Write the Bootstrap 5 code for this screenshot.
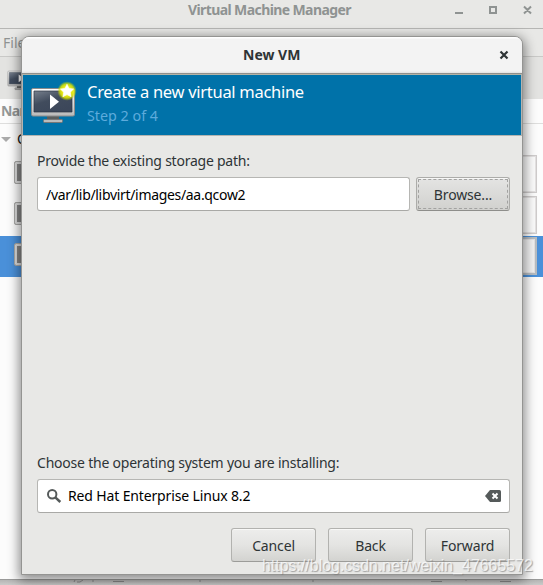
<!DOCTYPE html>
<html lang="en">
<head>
<meta charset="utf-8">
<meta name="viewport" content="width=device-width, initial-scale=1">
<title>Virtual Machine Manager</title>
<link href="https://cdn.jsdelivr.net/npm/bootstrap@5.3.0/dist/css/bootstrap.min.css" rel="stylesheet">
<style>
body{width:543px;height:585px;font-family:"Noto Sans","Open Sans",sans-serif;font-size:14px;line-height:20px;color:#2e3436;background:#c2c2c1}
.text-line{white-space:nowrap}
.main-win{height:580px;background:#fcfcfc;border-bottom:1px solid #9a9a99}
.main-title{height:29px;background:#e8e8e6;border-bottom:1px solid #b6b6b4;color:#8f9392;padding-right:11px}
.main-title .caption-text{margin-left:188px;font-weight:700;font-size:14px;letter-spacing:-.6px;line-height:20px}
.menu-strip{height:28px;background:#e8e8e6;border-bottom:1px solid #c9c9c7;color:#8f9392;padding-left:3px}
.tool-strip{height:42px;background:#e3e3e1;padding:9px 0 0 7px}
.head-strip{height:25px;border-bottom:1px solid #dededd;color:#949796;font-weight:700;padding-left:1px;letter-spacing:-.6px}
.group-line{height:30px;color:#111}
.vm-line{height:41px;padding:1px 6px 0 14px}
.vm-line.chosen{background:#4a90d9}
.mini-mon{width:30px;height:23px;margin-top:6px;border:1px solid #a9a9a7;border-radius:2px;background:#858585;box-shadow:inset 0 0 0 2px #dcdcdc}
.graph-box{width:120px;height:38px;border:1px solid #cfcccc;box-shadow:inset 0 0 0 1px #e4e2e2;background:#fbfbfb}
.chosen .graph-box{border:2px solid #b7bdc2;background:#f2f2f2}
.under-strip{height:5px;background:linear-gradient(#b5b5b4,#cacac9)}
.dialog-win{position:absolute;left:21px;top:36px;width:502px;height:539px;border:1px solid #949492;border-radius:8px 8px 0 0;background:#e8e8e6;box-shadow:0 3px 12px 2px rgba(0,0,0,.45);overflow:hidden}
.dialog-title{height:37px;background:linear-gradient(#fff 0,#fff 1px,#f3f3f3 2px,#f3f3f3 34px,#e2e2e1 36px);border-bottom:1px solid #8f8f8c;padding:0 13px 0 221px}
.dialog-title .caption-text{font-weight:700;font-size:14px}
.banner{height:62px;background:#0072a9;border:1px solid #b3b4b1;border-top-color:#b3b4a7;color:#fff;padding:4px 0 0 7px}
.banner-big{font-size:16.5px;line-height:25px;height:25px;margin-left:9px;letter-spacing:-.29px}
.banner-small{font-size:14.3px;line-height:23px;margin-left:9px;color:#5dabdc}
.form-area{padding:15px 12px 12px 15px;height:438px}
.field-label{letter-spacing:-.24px}
.os-label{letter-spacing:-.22px}
.path-row{gap:6px;margin-top:6px}
.form-area .form-control,.find-box{height:34px;border:1px solid #b6b6b3;border-bottom-color:#a9a9a6;border-radius:3px;background:#fff;color:#000;padding:0 8px;font-size:14px;box-shadow:none}
.form-area .form-control{letter-spacing:-.32px}
.find-box{margin-top:6px;letter-spacing:-.14px}
.btn-row{gap:12px;margin-top:15px}
.btn-vm{height:34px;width:85px;padding:0;border:1px solid #b2b2af;border-bottom-color:#9c9c99;border-radius:3px;background:linear-gradient(#ededec,#e4e4e2 50%,#d3d3d0);color:#2e3436;font-size:14px;line-height:31px;letter-spacing:-.15px;box-shadow:inset 0 1px #f8f8f7}
.btn-browse{width:94px;background:linear-gradient(#e4e4e3,#d1d1ce);border-color:#acaca9 #acaca9 #8e8e8b;outline:1px dashed #a2a2a0;outline-offset:-3px}
.wmark{position:absolute;left:262px;top:556px;font:15.93px/19px "Liberation Sans",Arial,sans-serif;color:rgba(255,255,255,.72);text-shadow:1px 1px 1px rgba(120,120,120,.65);white-space:nowrap}
</style>
<script src="https://cdn.jsdelivr.net/npm/bootstrap@5.3.0/dist/js/bootstrap.bundle.min.js"></script>
</head>
<body class="overflow-hidden position-relative">
<svg width="0" height="0" class="position-absolute" aria-hidden="true">
  <defs>
    <linearGradient id="frame" x2="0" y2="1"><stop stop-color="#fff"/><stop offset="1" stop-color="#b9b9b9"/></linearGradient>
    <linearGradient id="screen" x2=".6" y2="1"><stop stop-color="#77808d"/><stop offset=".5" stop-color="#414c5d"/><stop offset="1" stop-color="#3c475a"/></linearGradient>
    <radialGradient id="glow"><stop offset=".4" stop-color="#f6f620"/><stop offset=".72" stop-color="#dfe500" stop-opacity=".85"/><stop offset="1" stop-color="#b8d400" stop-opacity="0"/></radialGradient>
    <symbol id="monitor" viewBox="0 0 48 48">
      <path d="M17 37h12v5H17z" fill="#5b5e5e"/>
      <rect x="13.5" y="40.5" width="19" height="3" rx="1" fill="#bcbcbc" stroke="#777"/>
      <rect x="1.5" y="9.5" width="43" height="27.500" rx="1.500" fill="url(#frame)" stroke="#8c8c8c"/>
      <path d="M4 12h38v21H4z" fill="url(#screen)" stroke="#2d3542" stroke-width=".7"/>
      <path d="M20 15.500v14.500l9-7.200z" fill="#fff"/>
      <circle cx="37" cy="12" r="9.800" fill="url(#glow)"/>
      <path d="M37 5.300l2 4.100 4.600.6-3.300 3.200.8 4.600-4.100-2.200-4.100 2.200.8-4.600-3.300-3.200 4.600-.6z" fill="#fff" stroke="#fff" stroke-width=".6"/>
    </symbol>
  </defs>
</svg>
<main class="main-win">
  <div class="main-title d-flex align-items-start">
    <span class="caption-text text-line">Virtual Machine Manager</span>
    <svg class="ms-auto" width="78" height="20" fill="none" stroke="#8f9392" stroke-width="2"><path d="M1 13h8M36 7h6v6h-6zM70 6.500l7 7M77 6.500l-7 7"/></svg>
  </div>
  <div class="menu-strip d-flex align-items-center text-line">File</div>
  <div class="tool-strip"><svg class="d-block" width="28" height="26" viewBox="0 0 28 28" preserveAspectRatio="none"><use href="#monitor" width="28" height="28"/></svg></div>
  <div class="head-strip d-flex align-items-center text-line">Name</div>
  <div class="group-line d-flex align-items-center text-line"><svg width="17" height="12"><path d="M1 4h10l-5 5z" fill="#aaa"/></svg>QEMU/KVM</div>
  <div class="vm-line d-flex align-items-start justify-content-between"><span class="mini-mon"></span><span class="graph-box"></span></div>
  <div class="vm-line d-flex align-items-start justify-content-between"><span class="mini-mon"></span><span class="graph-box"></span></div>
  <div class="vm-line chosen d-flex align-items-start justify-content-between"><span class="mini-mon"></span><span class="graph-box"></span></div>
</main>
<div class="under-strip d-flex">
  <svg width="543" height="5" stroke="#858585" fill="none"><path d="M75 0l-1 2M83 0l-3 2h-3M93 0v2M113 1.500h11M200 0v2M313 0v2M431 1.500h11M466 0v1M500 1.500h11"/></svg>
</div>

<section class="dialog-win" role="dialog" aria-label="New VM">
  <header class="dialog-title d-flex align-items-center justify-content-between">
    <span class="caption-text text-line">New VM</span>
    <svg width="10" height="10" stroke="#2e3436" stroke-width="2.200"><path d="M1.500 1.500l7 7M8.500 1.500l-7 7"/></svg>
  </header>
  <div class="banner d-flex">
    <svg width="48" height="48"><use href="#monitor"/></svg>
    <div>
      <div class="banner-big text-line">Create a new virtual machine</div>
      <div class="banner-small text-line">Step 2 of 4</div>
    </div>
  </div>
  <div class="form-area d-flex flex-column">
    <div class="field-label text-line">Provide the existing storage path:</div>
    <div class="path-row d-flex">
      <div class="form-control d-flex align-items-center text-line">/var/lib/libvirt/images/aa.qcow2</div>
      <button class="btn btn-vm btn-browse flex-shrink-0" type="button">Browse...</button>
    </div>
    <div class="os-label mt-auto text-line">Choose the operating system you are installing:</div>
    <div class="find-box d-flex align-items-center text-line">
      <svg class="flex-shrink-0" width="22" height="16" fill="none" stroke="#555a5a"><circle cx="6.200" cy="6.200" r="4.200" stroke-width="2"/><path d="M9.300 9.300l5 4.700" stroke-width="2.500"/></svg>
      <span>Red Hat Enterprise Linux 8.2</span>
      <svg class="ms-auto" width="16" height="12"><path d="M0 6l5-6h9.500q1.500 0 1.500 1.500v9q0 1.500-1.500 1.500H5z" fill="#555a5a"/><path d="M7.500 3.500l5 5M12.500 3.500l-5 5" stroke="#fff" stroke-width="2"/></svg>
    </div>
    <div class="btn-row d-flex justify-content-end">
      <button class="btn btn-vm" type="button">Cancel</button>
      <button class="btn btn-vm" type="button">Back</button>
      <button class="btn btn-vm" type="button">Forward</button>
    </div>
  </div>
</section>
<div class="wmark">https://blog.csdn.net/weixin_47665572</div>
</body>
</html>
